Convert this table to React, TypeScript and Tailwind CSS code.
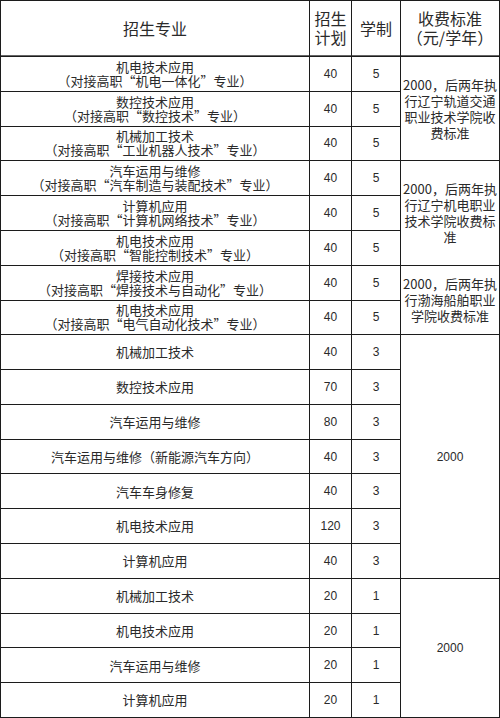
const fiveYear: [string, string][] = [
  ['机电技术应用', '（对接高职“机电一体化”专业）'],
  ['数控技术应用', '（对接高职“数控技术”专业）'],
  ['机械加工技术', '（对接高职“工业机器人技术”专业）'],
  ['汽车运用与维修', '（对接高职“汽车制造与装配技术”专业）'],
  ['计算机应用', '（对接高职“计算机网络技术”专业）'],
  ['机电技术应用', '（对接高职“智能控制技术”专业）'],
  ['焊接技术应用', '（对接高职“焊接技术与自动化”专业）'],
  ['机电技术应用', '（对接高职“电气自动化技术”专业）'],
];

const threeYear: [string, string][] = [
  ['机械加工技术', '40'],
  ['数控技术应用', '70'],
  ['汽车运用与维修', '80'],
  ['汽车运用与维修（新能源汽车方向）', '40'],
  ['汽车车身修复', '40'],
  ['机电技术应用', '120'],
  ['计算机应用', '40'],
];

const oneYear = ['机械加工技术', '机电技术应用', '汽车运用与维修', '计算机应用'];

// fee cells sit in column 4 and span rows; key = index of the first row in the body
const fees: Record<number, { span: string; lines: string[] }> = {
  0: { span: 'row-span-3', lines: ['2000，后两年执', '行辽宁轨道交通', '职业技术学院收', '费标准'] },
  3: { span: 'row-span-3', lines: ['2000，后两年执', '行辽宁机电职业', '技术学院收费标', '准'] },
  6: { span: 'row-span-2', lines: ['2000，后两年执', '行渤海船舶职业', '学院收费标准'] },
  8: { span: 'row-span-7', lines: ['2000'] },
  15: { span: 'row-span-4', lines: ['2000'] },
};

const cell = 'flex items-center justify-center bg-white text-center text-[#2a2a2a]';
const cjk = "[font-family:'Noto_Sans_CJK_SC',sans-serif]";
const num = "text-[12px] [font-family:'Liberation_Sans','Noto_Sans_CJK_SC',sans-serif]";

type Row = { major: React.ReactNode; plan: string; years: string };

export default function App() {
  const rows: Row[] = [
    ...fiveYear.map(([a, b]) => ({
      major: (
        <div className="leading-[14px]">
          <div>{a}</div>
          <div>{b}</div>
        </div>
      ),
      plan: '40',
      years: '5',
    })),
    ...threeYear.map(([a, p]) => ({ major: a, plan: p, years: '3' })),
    ...oneYear.map((a) => ({ major: a, plan: '20', years: '1' })),
  ];

  return (
    <div className={`h-[718px] w-[500px] bg-white ${cjk}`}>
      <div className="grid h-[718px] w-[500px] grid-cols-[308px_41px_48px_98px] grid-rows-[55px_repeat(19,minmax(0,1fr))] gap-px bg-[#1c1c1c] p-px">
        <div className={`${cell} border-b border-[#666] text-[16px]`}>招生专业</div>
        <div className={`${cell} border-b border-[#666] text-[16px] leading-[19px]`}>
          招生<br />计划
        </div>
        <div className={`${cell} border-b border-[#666] text-[16px]`}>学制</div>
        <div className={`${cell} border-b border-[#666] text-[16px] leading-[19px]`}>
          收费标准<br />（元/学年）
        </div>

        {rows.map((r, i) => {
          const fee = fees[i];
          return [
            <div key={`m${i}`} className={`${cell} text-[13px]`}>{r.major}</div>,
            <div key={`p${i}`} className={`${cell} ${num}`}>{r.plan}</div>,
            <div key={`y${i}`} className={`${cell} ${num}`}>{r.years}</div>,
            fee ? (
              <div key={`f${i}`} className={`${cell} ${fee.span} text-[13px] leading-[16px]`}>
                <div>
                  {fee.lines.map((l, j) => (
                    <div key={j} className={l === '2000' ? num : ''}>{l}</div>
                  ))}
                </div>
              </div>
            ) : null,
          ];
        })}
      </div>
    </div>
  );
}
